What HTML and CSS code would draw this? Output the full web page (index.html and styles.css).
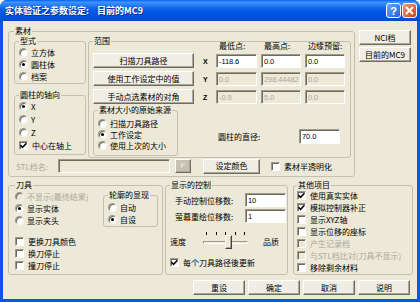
FILE: index.html
```html
<!DOCTYPE html>
<html lang="zh-CN">
<head>
    <meta charset="UTF-8">
    <title>实体验证之参数设定</title>
    <link rel="stylesheet" href="styles.css">
</head>
<body>
<div class="window">
    <div class="titlebar">
        <span class="title">实体验证之参数设定:&nbsp;&nbsp;&nbsp; 目前的MC9</span>
        <span class="tb-btn help">?</span>
        <span class="tb-btn close">
            <svg width="9" height="9" viewBox="0 0 9 9"><path d="M1 1L8 8M8 1L1 8" stroke="#fff" stroke-width="1.8"/></svg>
        </span>
    </div>
    <div class="client">
        <div class="top">
            <fieldset class="grp stock">
                <legend>素材</legend>
                <div class="stock-main">
                    <div class="stock-left">
                        <fieldset class="grp type">
                            <legend>型式</legend>
                            <div class="opt"><span class="radio"></span>立方体</div>
                            <div class="opt"><span class="radio on"></span>圆柱体</div>
                            <div class="opt"><span class="radio"></span>档案</div>
                        </fieldset>
                        <fieldset class="grp axis">
                            <legend>圆柱的轴向</legend>
                            <div class="opt"><span class="radio on"></span>X</div>
                            <div class="opt"><span class="radio"></span>Y</div>
                            <div class="opt"><span class="radio"></span>Z</div>
                            <div class="opt"><span class="check on"><svg viewBox="0 0 7 7"><path d="M0.5 3.2L2.6 5.3L6.5 1.2" fill="none" stroke="#000" stroke-width="1.6"/></svg></span>中心在轴上</div>
                        </fieldset>
                    </div>
                    <fieldset class="grp range">
                        <legend>范围</legend>
                        <div class="range-body">
                            <div class="range-left">
                                <div class="btn-stack">
                                    <button class="btn">扫描刀具路径</button>
                                    <button class="btn">使用工作设定中的值</button>
                                    <button class="btn">手动点选素材的对角</button>
                                </div>
                                <fieldset class="grp source">
                                    <legend>素材大小的原始来源</legend>
                                    <div class="opt"><span class="radio"></span>扫描刀具路径</div>
                                    <div class="opt"><span class="radio on"></span>工作设定</div>
                                    <div class="opt"><span class="radio"></span>使用上次的大小</div>
                                </fieldset>
                            </div>
                            <div class="range-right">
                                <div class="coords">
                                    <span></span>
                                    <span class="hd">最低点:</span>
                                    <span class="hd">最高点:</span>
                                    <span class="hd">边缘预留:</span>
                                    <span class="ax">X</span>
                                    <input class="edit" value="-118.6">
                                    <input class="edit" value="0.0">
                                    <input class="edit" value="0.0">
                                    <span class="ax">Y</span>
                                    <input class="edit" value="0.0" disabled>
                                    <input class="edit" value="298.44482" disabled>
                                    <input class="edit" value="0.0" disabled>
                                    <span class="ax">Z</span>
                                    <input class="edit" value="-0.9" disabled>
                                    <input class="edit" value="5.0" disabled>
                                    <input class="edit" value="0.0" disabled>
                                </div>
                                <div class="diam">
                                    <span class="diam-lbl">圆柱的直径:</span>
                                    <input class="edit diam-in" value="70.0">
                                </div>
                            </div>
                        </div>
                    </fieldset>
                </div>
                <div class="stl-row">
                    <span class="stl-lbl off">STL档名:</span>
                    <input class="edit stl-in" disabled>
                    <button class="btn small-btn" disabled>F</button>
                    <button class="btn color-btn">设定颜色</button>
                    <div class="opt trans"><span class="check"></span>素材半透明化</div>
                </div>
            </fieldset>
            <div class="side">
                <button class="btn">NCI档</button>
                <button class="btn">目前的MC9</button>
            </div>
        </div>

        <div class="bottom">
            <fieldset class="grp tool">
                <legend>刀具</legend>
                <div class="tool-top">
                    <div class="tool-opts">
                        <div class="opt off"><span class="radio dis"></span>不显示(最终结果)</div>
                        <div class="opt"><span class="radio on"></span>显示实体</div>
                        <div class="opt"><span class="radio"></span>显示夹头</div>
                    </div>
                    <fieldset class="grp outline">
                        <legend>轮廓的显现</legend>
                        <div class="opt"><span class="radio"></span>自动</div>
                        <div class="opt"><span class="radio on"></span>自设</div>
                    </fieldset>
                </div>
                <div class="tool-checks">
                    <div class="opt"><span class="check"></span>更换刀具颜色</div>
                    <div class="opt"><span class="check"></span>换刀停止</div>
                    <div class="opt"><span class="check"></span>撞刀停止</div>
                </div>
            </fieldset>

            <fieldset class="grp disp">
                <legend>显示的控制</legend>
                <div class="disp-row first">
                    <span class="disp-lbl">手动控制位移数:</span>
                    <input class="edit disp-in" value="10">
                </div>
                <div class="disp-row">
                    <span class="disp-lbl">萤幕重绘位移数:</span>
                    <input class="edit disp-in" value="1">
                </div>
                <div class="speed-row">
                    <span class="speed-lbl">速度</span>
                    <div class="slider">
                        <div class="ticks"><i></i><i></i><i></i><i></i><i></i></div>
                        <div class="track"></div>
                        <div class="thumb"></div>
                    </div>
                    <span class="quality">品质</span>
                </div>
                <div class="opt update"><span class="check on"><svg viewBox="0 0 7 7"><path d="M0.5 3.2L2.6 5.3L6.5 1.2" fill="none" stroke="#000" stroke-width="1.6"/></svg></span>每个刀具路径後更新</div>
            </fieldset>

            <fieldset class="grp other">
                <legend>其他项目</legend>
                <div class="opt"><span class="check on"><svg viewBox="0 0 7 7"><path d="M0.5 3.2L2.6 5.3L6.5 1.2" fill="none" stroke="#000" stroke-width="1.6"/></svg></span>使用真实实体</div>
                <div class="opt"><span class="check on"><svg viewBox="0 0 7 7"><path d="M0.5 3.2L2.6 5.3L6.5 1.2" fill="none" stroke="#000" stroke-width="1.6"/></svg></span>模拟控制器补正</div>
                <div class="opt"><span class="check"></span>显示XYZ轴</div>
                <div class="opt"><span class="check"></span>显示位移的座标</div>
                <div class="opt off"><span class="check dis"></span>产生记录档</div>
                <div class="opt off"><span class="check dis"></span>与STL档比对(刀具不显示)</div>
                <div class="opt"><span class="check"></span>移除剩余材料</div>
            </fieldset>
        </div>

        <div class="actions">
            <button class="btn">重设</button>
            <button class="btn">确定</button>
            <button class="btn">取消</button>
            <button class="btn">说明</button>
        </div>
    </div>
</div>
</body>
</html>
```

FILE: styles.css
```css
* {
    box-sizing: border-box;
}
body {
    margin: 0;
    font-family: "Noto Sans CJK SC", "Liberation Sans", sans-serif;
    font-size: 8px;
    color: #000;
    background: #fff;
}
.window {
    width: 420px;
    height: 302px;
    display: flex;
    flex-direction: column;
    background: #0A55E2;
    border-radius: 7px 7px 0 0;
    overflow: hidden;
}
.titlebar {
    height: 21px;
    flex: none;
    display: flex;
    align-items: center;
    padding: 0 3px 0 5px;
    background: linear-gradient(to bottom, #0A5FEE 0%, #3D95FF 10%, #2A82F6 22%, #0A5DE8 45%, #0054E3 65%, #0052DC 88%, #0744BC 100%);
}
.title {
    flex: 1;
    color: #fff;
    font-weight: bold;
    font-size: 9px;
    line-height: 12px;
    text-shadow: 1px 1px 0 #0F2F8C;
}
.tb-btn {
    width: 15px;
    height: 15px;
    margin-left: 1px;
    border: 1px solid #fff;
    border-radius: 3px;
    display: flex;
    align-items: center;
    justify-content: center;
}
.help {
    background: linear-gradient(135deg, #6AA6FF, #2461DA);
    color: #fff;
    font-family: "Liberation Sans", sans-serif;
    font-weight: bold;
    font-size: 11px;
}
.close {
    background: linear-gradient(135deg, #F19A78, #D2431A);
}
.client {
    flex: 1;
    margin: 0 3px 3px;
    padding: 5px 0 0 5px;
    background: #ECE9D8;
    display: flex;
    flex-direction: column;
}

/* group boxes */
.grp {
    margin: 0;
    padding: 0;
    min-width: 0;
    border: 1px solid #C3C0B1;
    border-radius: 3px;
}
.grp > legend {
    padding: 0 1px;
    margin: 0;
    height: 10px;
    line-height: 10px;
}
.opt {
    display: flex;
    align-items: center;
    height: 12px;
    white-space: nowrap;
}
.off {
    color: #ACA899;
}

/* classic controls */
.radio {
    width: 9px;
    height: 9px;
    margin-right: 3px;
    flex: none;
    border-radius: 50%;
    background: #fff;
    border: 1px solid;
    border-color: #9D9A8C #F6F5F0 #F6F5F0 #9D9A8C;
    box-shadow: inset 1px 1px 0 #6E6B60;
    display: flex;
    align-items: center;
    justify-content: center;
}
.radio.on::after {
    content: "";
    width: 3px;
    height: 3px;
    border-radius: 50%;
    background: #000;
}
.radio.dis,
.check.dis {
    background: #ECE9D8;
}
.check {
    width: 9px;
    height: 9px;
    margin-right: 4px;
    flex: none;
    background: #fff;
    border: 1px solid;
    border-color: #9D9A8C #fff #fff #9D9A8C;
    box-shadow: inset 1px 1px 0 #6E6B60;
    display: flex;
    align-items: center;
    justify-content: center;
}
.check svg {
    width: 7px;
    height: 7px;
}
.btn {
    font: inherit;
    color: #000;
    height: 15px;
    padding: 0;
    background: #EFEDE4;
    border: 1px solid;
    border-color: #fff #6E6B60 #6E6B60 #fff;
    box-shadow: inset -1px -1px 0 #ACA899;
    line-height: 12px;
}
.edit {
    font-family: "Liberation Sans", sans-serif;
    font-size: 7.5px;
    letter-spacing: -0.1px;
    height: 14px;
    padding: 0 0 0 2px;
    margin: 0;
    background: #fff;
    color: #000;
    border: 1px solid;
    border-color: #9D9A8C #fff #fff #9D9A8C;
    box-shadow: inset 1px 1px 0 #6E6B60;
    outline: none;
    min-width: 0;
}
.edit:disabled {
    background: #ECE9D8;
    color: #ACA899;
}

/* top section */
.top {
    display: flex;
    height: 151px;
}
.stock {
    width: 347px;
    height: 151px;
    padding: 0 3px 0 5px;
}
.stock-main {
    display: flex;
    gap: 2px;
}
.stock-left {
    width: 72px;
    display: flex;
    flex-direction: column;
    gap: 6px;
}
.type {
    height: 48px;
    padding: 0 0 0 4px;
}
.axis {
    height: 65px;
    padding: 0 0 0 4px;
}
.axis .opt {
    height: 13px;
}
.range {
    width: 263px;
    height: 122px;
    padding: 0 0 0 4px;
}
.range-body {
    display: flex;
}
.range-left {
    width: 101px;
    flex: none;
    padding-top: 7px;
}
.btn-stack {
    display: flex;
    flex-direction: column;
    gap: 3px;
}
.source {
    width: 85px;
    height: 51px;
    margin-top: 1px;
    padding: 3px 0 0 4px;
}
.source .opt {
    height: 11px;
}
.range-right {
    margin-top: -4px;
    padding-left: 9px;
}
.coords {
    display: grid;
    grid-template-columns: 9px 41px 40px 40px;
    grid-template-rows: 8px 14px 14px 14px;
    column-gap: 4px;
    row-gap: 4px;
    align-items: center;
}
.hd {
    padding-left: 3px;
    line-height: 8px;
}
.ax {
    font-family: "Liberation Sans", sans-serif;
    font-size: 7px;
    font-weight: bold;
}
.diam {
    display: flex;
    align-items: center;
    margin-top: 25px;
}
.diam-lbl {
    width: 96px;
    padding-left: 15px;
}
.diam-in {
    width: 41px;
    height: 15px;
}
.stl-row {
    display: flex;
    align-items: center;
    height: 14px;
    margin-top: 1px;
}
.stl-lbl {
    width: 44px;
    padding-left: 2px;
}
.stl-in {
    width: 112px;
}
.small-btn {
    width: 16px;
    height: 14px;
    margin-left: 5px;
    background: #C4C1B4;
    color: #F2F0E8;
    font-family: "Liberation Sans", sans-serif;
}
.color-btn {
    width: 57px;
    margin-left: 12px;
}
.trans {
    margin-left: 11px;
}
.side {
    width: 52px;
    margin-left: 4px;
    padding-top: 4px;
    display: flex;
    flex-direction: column;
    gap: 2px;
}

/* bottom section */
.bottom {
    display: flex;
    height: 95px;
    margin-top: 3px;
}
.tool {
    width: 155px;
    padding: 0 4px 0 6px;
}
.tool-top {
    display: flex;
}
.outline {
    width: 55px;
    height: 37px;
    margin-left: auto;
    padding: 1px 0 0 4px;
}
.tool-checks {
    margin-top: 8px;
}
.disp {
    width: 123px;
    margin-left: 2px;
    padding: 0 0 0 4px;
}
.disp-row {
    display: flex;
    align-items: center;
    height: 14px;
    margin-top: 2px;
}
.disp-row.first {
    margin-top: 3px;
}
.disp-lbl {
    width: 75px;
    padding-left: 5px;
}
.disp-in {
    width: 41px;
}
.speed-row {
    display: flex;
    align-items: center;
    height: 20px;
    margin-top: 8px;
}
.speed-lbl {
    width: 33px;
}
.slider {
    position: relative;
    width: 45px;
    height: 20px;
}
.ticks {
    display: flex;
    justify-content: space-between;
    padding: 0 3px;
    margin-top: 1px;
    height: 3px;
}
.ticks i {
    width: 1px;
    height: 3px;
    background: #000;
}
.track {
    margin-top: 6px;
    height: 3px;
    border: 1px solid;
    border-color: #9D9A8C #fff #fff #9D9A8C;
}
.thumb {
    position: absolute;
    left: 22px;
    top: 4px;
    width: 7px;
    height: 14px;
    background: #ECE9D8;
    border: 1px solid;
    border-color: #fff #404040 #404040 #fff;
    box-shadow: inset -1px -1px 0 #ACA899;
}
.quality {
    margin-left: 15px;
}
.update {
    margin-top: 5px;
}
.other {
    width: 120px;
    margin-left: 5px;
    padding: 0 0 0 3px;
}
.other legend + .opt {
    margin-top: -1px;
}
.actions {
    display: flex;
    gap: 3px;
    margin-top: 5px;
    padding-left: 185px;
}
.actions .btn {
    width: 52px;
}
```
